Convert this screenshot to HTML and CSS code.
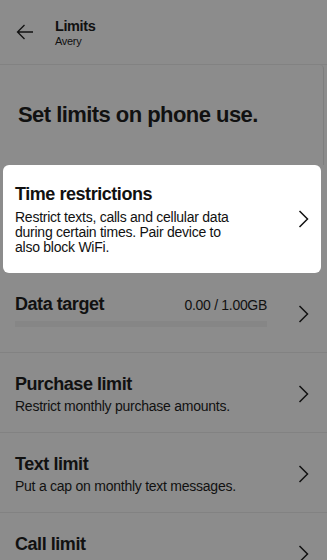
FILE: index.html
```html
<!DOCTYPE html>
<html lang="en">
<head>
<meta charset="utf-8">
<title>Limits</title>
<link rel="stylesheet" href="styles.css">
</head>
<body>
<div class="page">
  <header class="topbar">
    <svg class="back" width="18" height="16" viewBox="0 0 18 16"><path d="M17 8H1.5M8.5 1L1.5 8L8.5 15" fill="none" stroke="#111" stroke-width="1.3"/></svg>
    <div class="titles">
      <div class="title">Limits</div>
      <div class="subtitle">Avery</div>
    </div>
  </header>
  <section class="intro">
    <h1>Set limits on phone use.</h1>
  </section>
  <div class="card">
    <div class="body">
      <div class="row-title">Time restrictions</div>
      <div class="card-desc">Restrict texts, calls and cellular data during certain times. Pair device to also block WiFi.</div>
    </div>
    <svg class="chev" width="11" height="18" viewBox="0 0 11 18"><path d="M1.5 1L9.5 9L1.5 17" fill="none" stroke="#111" stroke-width="1.5"/></svg>
  </div>
  <div class="row">
    <div class="body">
      <div class="data-head">
        <div class="row-title">Data target</div>
        <div class="value">0.00 / 1.00GB</div>
      </div>
      <div class="bar"></div>
    </div>
    <svg class="chev" width="11" height="18" viewBox="0 0 11 18"><path d="M1.5 1L9.5 9L1.5 17" fill="none" stroke="#111" stroke-width="1.5"/></svg>
  </div>
  <div class="row">
    <div class="body">
      <div class="row-title">Purchase limit</div>
      <div class="row-desc">Restrict monthly purchase amounts.</div>
    </div>
    <svg class="chev" width="11" height="18" viewBox="0 0 11 18"><path d="M1.5 1L9.5 9L1.5 17" fill="none" stroke="#111" stroke-width="1.5"/></svg>
  </div>
  <div class="row">
    <div class="body">
      <div class="row-title">Text limit</div>
      <div class="row-desc">Put a cap on monthly text messages.</div>
    </div>
    <svg class="chev" width="11" height="18" viewBox="0 0 11 18"><path d="M1.5 1L9.5 9L1.5 17" fill="none" stroke="#111" stroke-width="1.5"/></svg>
  </div>
  <div class="row last">
    <div class="body">
      <div class="row-title">Call limit</div>
    </div>
    <svg class="chev" width="11" height="18" viewBox="0 0 11 18"><path d="M1.5 1L9.5 9L1.5 17" fill="none" stroke="#111" stroke-width="1.5"/></svg>
  </div>
</div>
</body>
</html>
```
FILE: styles.css
```css
html, body {
  margin: 0;
  padding: 0;
  background: #8c8c8c;
  height: 560px;
  overflow: hidden;
}
body {
  font-family: "Liberation Sans", Arial, sans-serif;
  color: #111;
}
.page {
  display: flex;
  flex-direction: column;
}
.topbar {
  height: 64px;
  border-bottom: 1px solid #828282;
  display: flex;
  align-items: center;
  padding-left: 16px;
  gap: 21px;
}
.back {
  display: block;
}
.titles {
  display: flex;
  flex-direction: column;
  padding-top: 2px;
}
.title {
  font-size: 14.5px;
  font-weight: 700;
  line-height: 17px;
  letter-spacing: -0.4px;
}
.subtitle {
  font-size: 11px;
  line-height: 13px;
  letter-spacing: -0.3px;
}
.intro {
  height: 100px;
  padding-left: 18px;
  border-right: 1px solid #7e7e7e;
  border-top-right-radius: 4px;
  margin-right: 3px;
  display: flex;
  align-items: center;
}
.intro h1 {
  margin: 0;
  font-size: 22px;
  font-weight: 700;
  letter-spacing: -0.55px;
  line-height: 26px;
}
.card {
  margin: 0 6px 0 3px;
  background: #fff;
  border-radius: 6px;
  padding: 18px 12px 18px 12px;
  display: flex;
  align-items: center;
  height: 72px;
}
.card .body {
  flex: 1;
}
.row-title {
  font-size: 18px;
  font-weight: 700;
  line-height: 22px;
  letter-spacing: -0.45px;
}
.card-desc {
  font-size: 14px;
  line-height: 15px;
  margin-top: 5px;
  letter-spacing: -0.25px;
  width: 232px;
}
.row {
  height: 80px;
  box-sizing: border-box;
  border-bottom: 1px solid #828282;
  padding: 20px 18px 0 15px;
  display: flex;
  align-items: flex-start;
}
.row.last {
  border-bottom: none;
}
.row .body {
  width: 252px;
}
.row .chev {
  margin-left: auto;
  margin-top: 12px;
}
.row-desc {
  font-size: 14px;
  line-height: 18px;
  margin-top: 2px;
  letter-spacing: -0.25px;
}
.data-head {
  display: flex;
  justify-content: space-between;
  align-items: baseline;
}
.value {
  font-size: 14px;
  letter-spacing: -0.3px;
}
.bar {
  margin-top: 6px;
  height: 6px;
  background: #868686;
}
.chev {
  display: block;
  flex: none;
}
```
